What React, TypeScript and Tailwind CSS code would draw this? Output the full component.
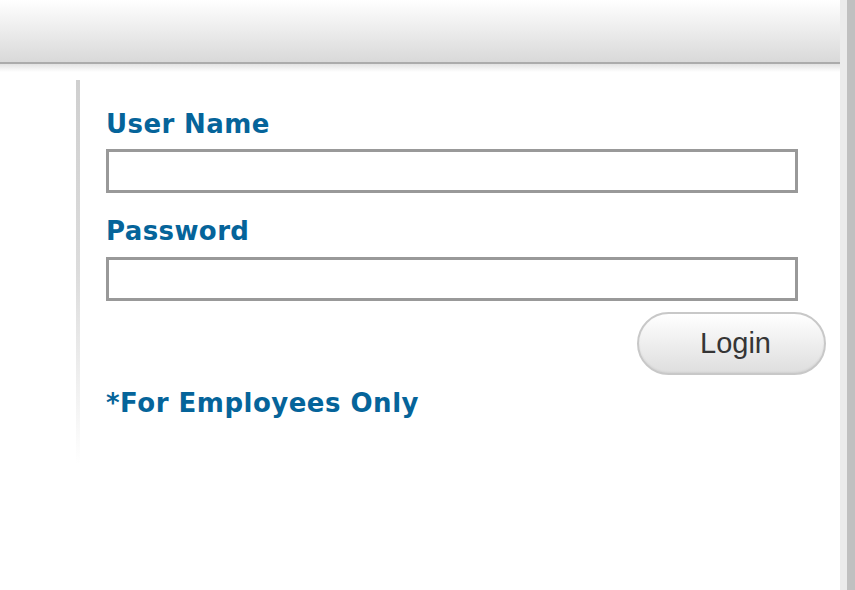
export default function App() {
  return (
    <div className="flex h-[590px] w-[855px] overflow-hidden bg-white" style={{ fontFamily: '"DejaVu Sans", Verdana, sans-serif' }}>
      <div className="flex-1">
        {/* Header bar */}
        <div className="h-[62px] bg-gradient-to-b from-white to-[#d9d9d9]" />
        <div className="h-[2px] bg-[#ababab]" />
        <div className="h-[8px] bg-gradient-to-b from-[#e2e2e2] to-white" />

        {/* Login panel */}
        <div className="ml-[76px] mt-[8px] flex">
          <div className="w-[4px] h-[385px] bg-gradient-to-b from-[#cfcfcf] via-[#dcdcdc] to-white" />
          <div className="pl-[26px] pt-[28px] w-[750px]">
            <label className="block text-[26px] font-bold leading-[32px] tracking-[0.4px] text-[#05649a]">User Name</label>
            <input type="text" className="mt-[9px] block w-[692px] h-[44px] border-[3px] border-[#999999] bg-white outline-none" />

            <label className="mt-[22px] block text-[26px] font-bold leading-[32px] tracking-[0.4px] text-[#05649a]">Password</label>
            <input type="password" className="mt-[10px] block w-[692px] h-[44px] border-[3px] border-[#999999] bg-white outline-none" />

            <div className="mt-[11px] flex justify-end w-[720px]">
              <button
                className="w-[189px] h-[63px] rounded-full border-2 border-[#c8c8c8] bg-gradient-to-b from-white to-[#dedede] pl-[8px] text-[29px] text-[#353535] shadow-[inset_0_-1px_2px_rgba(0,0,0,0.06)]"
                style={{ fontFamily: '"Liberation Sans", Arial, sans-serif' }}
              >
                Login
              </button>
            </div>

            <p className="mt-[12px] text-[26px] font-bold leading-[32px] tracking-[0.5px] text-[#05649a]">*For Employees Only</p>
          </div>
        </div>
      </div>

      {/* Scrollbar strip */}
      <div className="w-[7px] bg-[#ebebeb]" />
      <div className="w-[8px] bg-[#c0c0c0]" />
    </div>
  )
}
